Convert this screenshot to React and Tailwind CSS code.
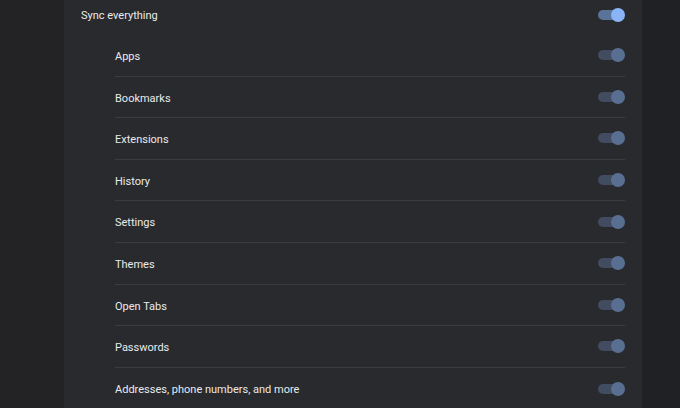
const items = [
  'Apps',
  'Bookmarks',
  'Extensions',
  'History',
  'Settings',
  'Themes',
  'Open Tabs',
  'Passwords',
  'Addresses, phone numbers, and more',
];

const Toggle = ({ dim }) => (
  <div className="relative h-[14px] w-[27px] shrink-0">
    <div
      className={`absolute left-0 top-[2px] h-[10px] w-[24px] rounded-full ${
        dim ? 'bg-[#414c60]' : 'bg-[#5a7499]'
      }`}
    />
    <div
      className={`absolute right-0 top-0 h-[14px] w-[14px] rounded-full ${
        dim ? 'bg-[#596f92]' : 'bg-[#8ab4f8]'
      }`}
    />
  </div>
);

export default function App() {
  return (
    <div
      className="flex h-[408px] w-[680px] justify-center overflow-hidden bg-[#202124] text-[#e8eaed]"
      style={{ fontFamily: 'Roboto, "Liberation Sans", sans-serif' }}
    >
      <div className="w-[64px] shrink-0 bg-[#232326]" />
      <div className="w-[578px] shrink-0 bg-[#292a2d] pl-[17px] pr-[17px] shadow-[2px_0_3px_rgba(0,0,0,0.3)]">
        <div className="flex h-[30px] items-center justify-between text-[11px]">
          <span className="pt-[2px]">Sync everything</span>
          <Toggle />
        </div>
        <div className="mt-[5px] pl-[34px]">
          {items.map((label, i) => (
            <div
              key={label}
              className={`flex h-[41.6px] items-center justify-between text-[11px] ${
                i < items.length - 1 ? 'border-b border-[#3c3d40]' : ''
              }`}
            >
              <span className="pt-[4px]">{label}</span>
              <Toggle dim />
            </div>
          ))}
        </div>
      </div>
      <div className="flex-1 bg-[#202124]" />
    </div>
  );
}
